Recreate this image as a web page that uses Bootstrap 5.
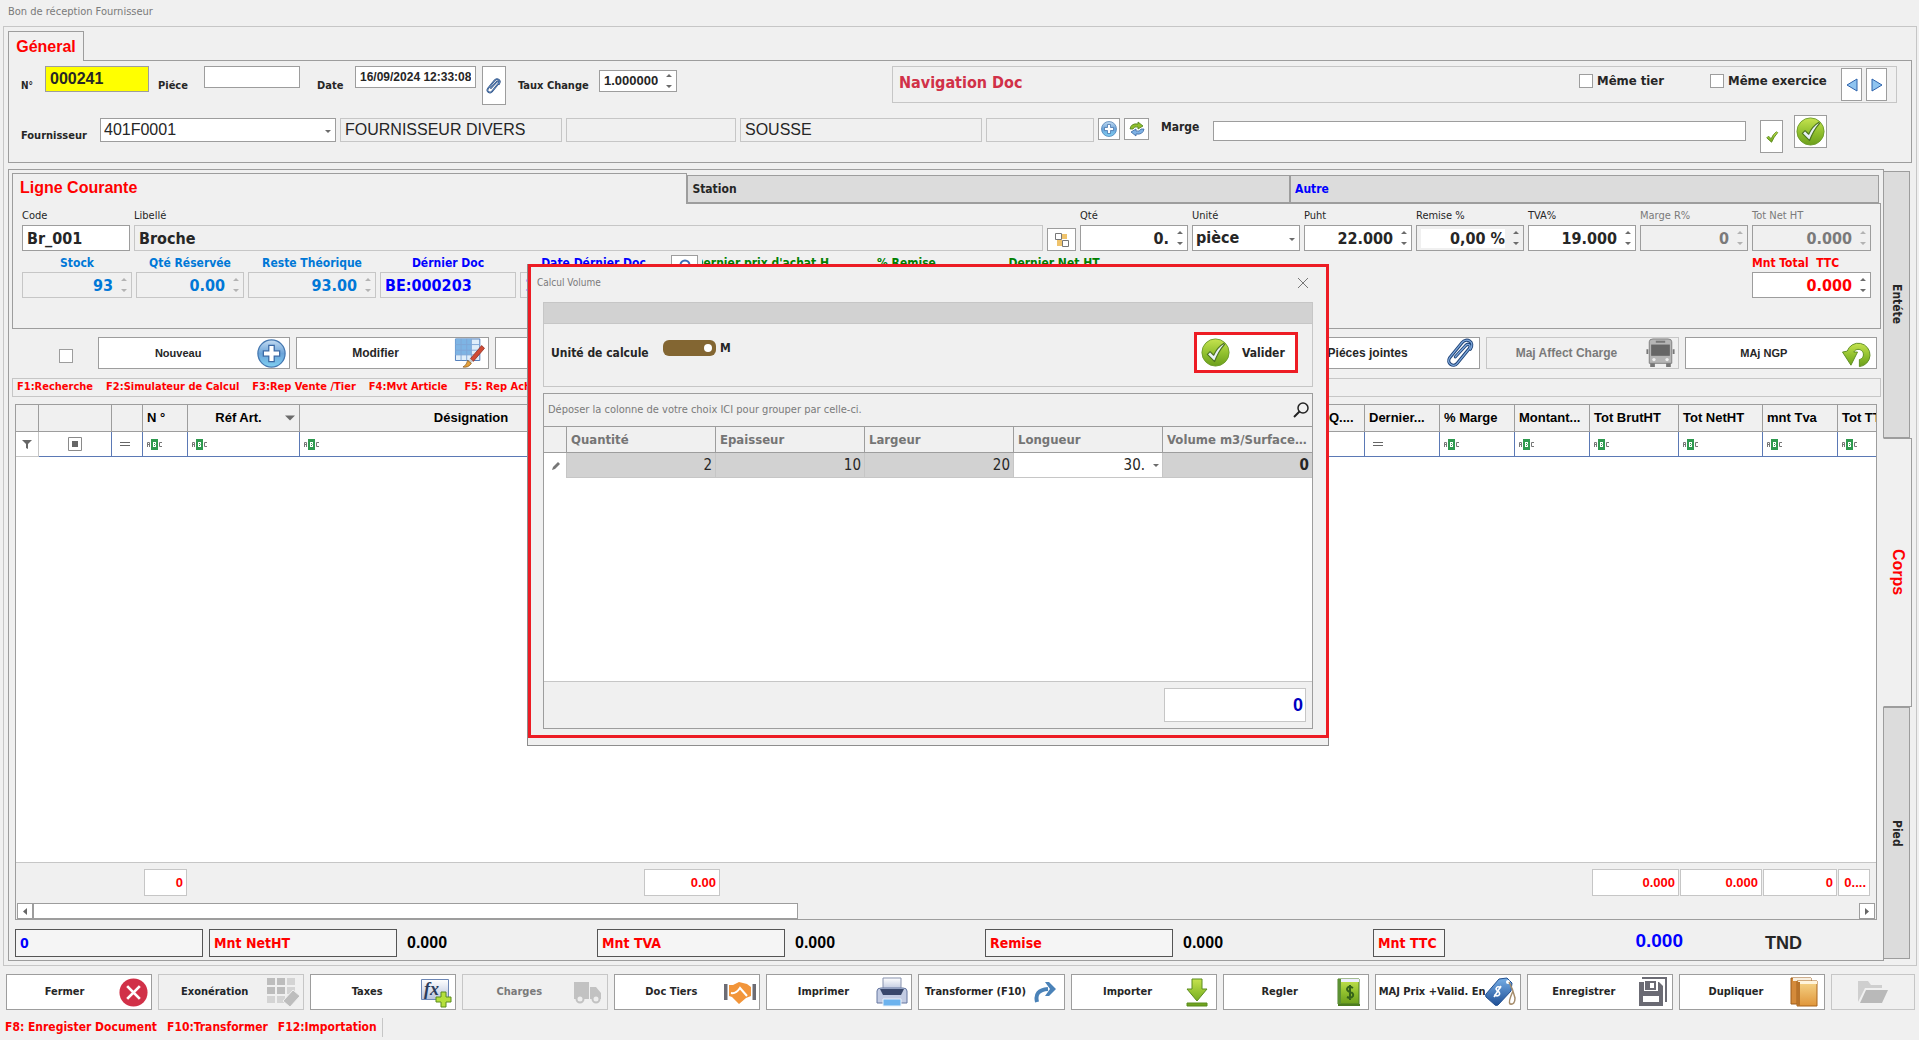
<!DOCTYPE html>
<html lang="fr">
<head>
<meta charset="utf-8">
<meta name="viewport" content="width=device-width, initial-scale=1">
<title>Bon de réception Fournisseur</title>
<link href="https://cdn.jsdelivr.net/npm/bootstrap@5.3.0/dist/css/bootstrap.min.css" rel="stylesheet">
<style>
:root{--bg:#f0f0f0;--line:#9d9d9d;--soft:#c6c6c6;--ink:#262626;--tah:"DejaVu Sans Condensed","DejaVu Sans",sans-serif;--ari:"Liberation Sans",Arial,sans-serif}
body{background:var(--bg);color:var(--ink);font:11px/16px var(--tah);min-height:100vh;overflow-x:hidden}
button,input,select{font:inherit;color:inherit;border-radius:0}
svg{display:block;flex:none}
.ari{font-family:var(--ari)}
.f10{font-size:10px}.f11{font-size:11px}.f12{font-size:12px}.f13{font-size:13px}.f16{font-size:16px}
.c-red{color:#f00!important}.c-blue{color:#00f!important}.c-sky{color:#0078d7!important}.c-green{color:#008000!important}.c-dim{color:#7a7a7a!important}
.app-title{height:26px;padding:4px 8px;font-size:11px;color:#7a7a7a}
.frame{margin:0 2px 0 3px;border:1px solid var(--soft);padding:4px 4px 4px 4px}
.tab-main{border:1px solid var(--line);border-bottom:0;background:var(--bg);height:30px;width:76px;margin-bottom:-1px;color:#f00;font:700 16px/26px var(--ari);padding:0;position:relative}
.box-top{border:1px solid var(--line);padding:5px 14px 9px 12px}
.inp{border:1px solid var(--line);background:#fff;height:22px;padding:0 4px;min-width:0;display:flex;align-items:center;border-radius:0}
input.inp{display:block}
.inp input{border:0;background:transparent;padding:0;min-width:0;width:100%;outline:0}
.inp.ro,input.inp:read-only.ro{background:transparent;border-color:var(--soft)}
.h24{height:24px}.h26{height:26px}
.num input{text-align:right;font-weight:700}
.num svg{margin-left:8px}
.num.dim svg{opacity:.45}
.big input,.big select,input.big{font-size:16px;font-weight:700}
.sel{position:relative;padding:0}
.sel select{appearance:none;border:0;background:transparent;width:100%;height:100%;padding:0 20px 0 3px;outline:0}
.sel svg{position:absolute;right:4px;top:50%}
.tb{border:1px solid var(--line);background:#fff;padding:0;display:flex;align-items:center;justify-content:center}
.chk{appearance:none;width:14px;height:14px;border:1px solid var(--line);background:#fff;margin:0;flex:none}
.nav-doc{border:1px solid var(--soft);height:37px;margin-left:215px;padding:1px 9px 0 6px}
.body-frame{border:1px solid var(--line);padding:3px 2px 3px 3px;position:relative}
.sub-tabs{padding-right:2px}
.sub-tabs button{border:1px solid var(--line);border-left-width:1px;background:#dcdcdc;height:28px;text-align:left;padding:0 4px;font-weight:700;font-size:12px}
.sub-tabs button.on{border-width:1px 1px 0 1px;background:var(--bg);height:31px;margin-bottom:-1px;color:#f00;font:700 16px/26px var(--ari);padding:0 7px 3px;position:relative}
.t1{flex:672 1 0}.t2{flex:604 1 0}.t3{flex:590 1 0}
.line-box{border:1px solid var(--line);height:126px;padding:4px 9px 0 9px}
.col-f{flex:none;width:108px}
.col-f label{display:block;height:17px;line-height:16px;white-space:nowrap}
.r2 label{font-weight:700;font-size:12px;text-align:center}
.acts{padding:8px 4px 0 47px;height:49px}
.acts .chk{margin:12px 19px 0 0}
.act{flex:1 1 0;min-width:0;height:32px;border:1px solid var(--line);background:#fff;font:700 12px/16px var(--ari);display:flex;align-items:center;padding:0 3px 0 0}
.act.sm{font-size:11px}
.act span,.cmd span{flex:1;text-align:center;white-space:nowrap;overflow:hidden}
.act.off,.cmd.off{background:transparent;border-color:var(--soft)}
.keys{border:1px solid var(--soft);height:19px;padding:0 4px;color:#f00;font-weight:700;gap:13px;overflow:hidden;white-space:nowrap}
.grid-wrap{border:1px solid var(--line);margin:7px 4px 9px 3px;background:#fff;flex:1;overflow:hidden}
table.dg{width:100%;table-layout:fixed;border-collapse:separate;border-spacing:0;margin:0}
.dg th{background:var(--bg);border-right:1px solid var(--line);border-bottom:1px solid var(--line);height:27px;padding:0 4px;font:700 13px/16px var(--ari);color:#000;white-space:nowrap;overflow:hidden}
.dg th:last-child,.dg td:last-child{border-right:0!important}
.main td{height:25px;padding:0 4px;border-right:1px solid #5b79b5;border-bottom:1px solid #5b79b5}
.tot{border:1px solid var(--soft);background:#fff;height:27px;text-align:right;padding:0 3px;color:#f00;font:700 13px/25px var(--ari);overflow:hidden}
.g-foot{background:var(--bg);border-top:1px solid var(--soft);height:57px;padding-top:6px}
.foot-row{display:grid;grid-template-columns:127px 43px 455px 76px 1fr 87px 82px 74px 32px 5px;column-gap:1px}
.hbar{margin-top:7px;padding:0 1px;height:16px}
.hbar button{width:16px;height:16px}
.thumb{border:1px solid var(--line);background:#fff;width:41.2%;height:16px}
.sums{padding:0 4px 0 3px;height:28px;gap:6px}
.sum-l{border:1px solid #555;background:#f5f5f5;flex:0 1 188px;height:28px;padding:0 4px;font-weight:700;font-size:14px;line-height:26px}
.sum-v{font:700 16px/28px var(--ari);color:#000;flex:0 1 188px;padding-left:4px}
.side{width:29px;margin-left:-1px;padding:2px 0 2px;position:relative}
.side button{border:1px solid var(--line);background:#dcdcdc;writing-mode:vertical-rl;width:27px;padding:0;font-weight:700;font-size:12px;text-align:center}
.side button.on{background:var(--bg);border-left-color:var(--bg);width:29px;color:#f00;font:700 16px/24px var(--ari)}
.cmds{gap:6px;padding:8px 4px 0 6px}
.cmd{flex:1 1 146px;min-width:0;height:36px;border:1px solid var(--line);background:#fff;font-weight:700;display:flex;align-items:center;padding:0 3px}
.cmd.short{flex-basis:84px}
.ico{flex:none;width:32px;display:flex;justify-content:center}
.status{height:30px;padding:8px 5px;color:#f00;font-weight:700;font-size:12px;line-height:18px;gap:10px}
.status .bar{border-left:1px solid var(--soft);margin-left:-5px;height:19px}
/* floating volume window */
.dlg{position:absolute;left:527px;top:264px;width:802px;height:482px;border:1px solid #8d8d8d;background:var(--bg);z-index:5}
.dlg-in{border:3px solid #ed1c24;margin:-1px -1px 0 0;height:474px;padding:4px 13px 6px 12px}
.dlg-t{height:31px;padding-top:2px;margin-left:-6px;color:#7a7a7a}
.dlg-t span{line-height:20px}
.grp{border:1px solid var(--soft);height:85px}
.grp-h{background:#d2d2d2;border-bottom:1px solid var(--soft);height:21px}
.ok{border:3px solid #ed1c24;background:#fff;width:104px;height:41px;font-weight:700;font-size:12px;display:flex;align-items:center;padding:0 0 0 4px;gap:12px}
.tog{appearance:none;width:53px;height:16px;border-radius:6px;background:#836632;margin:0;position:relative}
.tog::after{content:"";position:absolute;right:4px;top:4px;width:8px;height:8px;border-radius:50%;background:#fff}
.vg{border:1px solid var(--line);background:#fff;margin-top:6px}
.vg-g{height:33px;background:var(--bg);border-bottom:1px solid var(--line);padding:0 3px 0 4px;color:#7a7a7a}
.dg.vol th{font:700 13px/16px var(--tah);color:#757575;height:26px;text-overflow:ellipsis}
.vol td{background:#d2d2d2;height:25px;border-right:1px solid var(--soft);border-bottom:1px solid var(--soft);font-size:15px;text-align:right;padding:0 3px}
.vol td.w{background:#fff;color:inherit}
.vol input{width:100%;border:0;background:transparent;text-align:right;padding:0;outline:0}
.vg-f{background:var(--bg);border-top:1px solid var(--soft);height:47px;padding:6px 6px}
.vg-f input{width:142px;height:34px;border:1px solid var(--soft);background:#fff;text-align:right;font:700 18px/20px var(--ari);color:#0000c0;padding:0 2px}
</style>
<script src="https://cdn.jsdelivr.net/npm/bootstrap@5.3.0/dist/js/bootstrap.bundle.min.js"></script>
</head>
<body class="d-flex flex-column">
<svg width="0" height="0" class="position-absolute" aria-hidden="true">
<defs>
<linearGradient id="gG" x2="0" y2="1"><stop offset="0" stop-color="#c6e34f"/><stop offset=".55" stop-color="#8fbf2d"/><stop offset="1" stop-color="#6c9f1c"/></linearGradient>
<linearGradient id="gB" x2="0" y2="1"><stop offset="0" stop-color="#c4dcf2"/><stop offset=".5" stop-color="#6ba3d8"/><stop offset="1" stop-color="#7fd0f2"/></linearGradient>
<linearGradient id="gN" x2="0" y2="1"><stop offset="0" stop-color="#76aee6"/><stop offset="1" stop-color="#1f4f96"/></linearGradient>
<linearGradient id="gO" x2="0" y2="1"><stop offset="0" stop-color="#f6d58a"/><stop offset="1" stop-color="#e0963a"/></linearGradient>
<linearGradient id="gS" x2="0" y2="1"><stop offset="0" stop-color="#fff"/><stop offset="1" stop-color="#b9c3dc"/></linearGradient>
<symbol id="spin" viewBox="0 0 6 16"><path d="M0 4h6L3 1zM0 12h6l-3 3z" fill="#6b6b6b"/></symbol>
<symbol id="dn" viewBox="0 0 6 3"><path d="M0 0h6L3 3z" fill="#6b6b6b"/></symbol>
<symbol id="clip" viewBox="0 0 32 32"><g fill="none" stroke-linecap="round"><path d="M10 20 21 8c3-3 6 0 4 3L12 27c-4 5-12 0-8-6L17 5c5-6 14-1 9 7" stroke="#1f4377" stroke-width="3.400"/><path d="M10 20 21 8c3-3 6 0 4 3L12 27c-4 5-12 0-8-6L17 5c5-6 14-1 9 7" stroke="#7fa9dd" stroke-width="1.300"/></g></symbol>
<symbol id="plus" viewBox="0 0 32 32"><circle cx="16" cy="16" r="15" fill="url(#gB)" stroke="#4477b0" stroke-width="1.400"/><path d="M13 7h6v6h6v6h-6v6h-6v-6H7v-6h6z" fill="#fff" stroke="#3a69a5" stroke-width="1.400"/></symbol>
<symbol id="okay" viewBox="0 0 32 32"><circle cx="16" cy="16" r="15" fill="url(#gG)" stroke="#6b9a2a"/><path d="M7 18l3-3 4 4Q18 10 25 6l1 1Q19 15 15 26z" fill="#e9f1f7" stroke="#4d7420" stroke-width="1.300" stroke-linejoin="round"/></symbol>
<symbol id="tick" viewBox="0 0 16 16"><path d="M2 9l2-2 3 3Q9 5 13 2l1.500 1Q10 8 7.500 14z" fill="url(#gG)" stroke="#5b8a1c"/></symbol>
<symbol id="swap" viewBox="0 0 16 16"><path d="M1 8Q2 2 9 3V1l5 4-5 3V6Q5 5 4 8z" fill="#8fbf2d" stroke="#4d7e1c" stroke-width=".8"/><path d="M15 8q-1 6-8 5v2l-5-4 5-3v2q4 1 5-2z" fill="#7db0e4" stroke="#3766a0" stroke-width=".8"/></symbol>
<symbol id="lt" viewBox="0 0 12 14"><path d="M11 1v12L1 7z" fill="#8fc4f0" stroke="#2d62ac" stroke-linejoin="round"/></symbol>
<symbol id="rt" viewBox="0 0 12 14"><path d="M1 1v12l10-6z" fill="#8fc4f0" stroke="#2d62ac" stroke-linejoin="round"/></symbol>
<symbol id="cells" viewBox="0 0 16 16"><path d="M8 2h5v5H8zM3 8h5v6H3z" fill="#efc36c"/><path d="M1.500 1.500h6v6h-6zM8.500 8.500h6v6h-6z" fill="#fff" stroke="#777"/></symbol>
<symbol id="abc" viewBox="0 0 16 11"><path d="M4 0h7v11H4z" fill="#2f9a4f"/><g fill="none" stroke="#777"><path d="M.5 8V3.500h2V8M.5 5.500h2"/><path d="M15 3.500h-2.500v4H15"/></g><path d="M6 3h3v2h-.5v1H9v2H6z" fill="#fff"/><path d="M7 4h1v1H7zM7 6h1v1H7z" fill="#2f9a4f"/></symbol>
<symbol id="eq" viewBox="0 0 10 10"><path d="M0 3.500h10M0 6.500h10" stroke="#666"/></symbol>
</defs></svg>

<header class="app-title">Bon de réception Fournisseur</header>
<main class="frame d-flex flex-column flex-grow-1">
  <div class="d-flex"><button class="tab-main">Géneral</button></div>
  <section class="box-top">
    <div class="d-flex align-items-start" style="height:49px">
      <div class="d-flex fw-bold" style="height:39px">
        <label for="no" class="align-self-center f10" style="width:24px">N°</label>
        <input id="no" class="inp h26 f16 ari fw-bold" style="width:104px;background:#ff0" value="000241">
        <label for="pc" class="align-self-center" style="width:55px;padding-left:9px">Piéce</label>
        <input id="pc" class="inp" style="width:96px">
        <label for="dt" class="align-self-center" style="width:55px;padding-left:17px">Date</label>
        <input id="dt" class="inp ari f12 fw-bold" style="width:121px" value="16/09/2024 12:33:08">
        <button class="tb" style="width:24px;margin:0 12px 0 6px" aria-label="Joindre"><svg width="16" height="16"><use href="#clip"/></svg></button>
        <label for="tc" class="align-self-center" style="width:81px">Taux Change</label>
        <div class="inp num mt-1" style="width:78px"><input id="tc" class="ari f13" value="1.000000"><svg width="6" height="16"><use href="#spin"/></svg></div>
      </div>
      <div class="nav-doc d-flex flex-grow-1">
        <div class="fw-bold f16 flex-grow-1" style="color:#d13148;line-height:30px">Navigation Doc</div>
        <div class="d-flex align-items-center fw-bold f13" style="height:26px">
          <input class="chk" type="checkbox" id="mt"><label class="ps-1" for="mt" style="width:117px">Même tier</label>
          <input class="chk" type="checkbox" id="me"><label class="ps-1" for="me" style="width:117px">Même exercice</label>
        </div>
        <button class="tb me-1" style="width:21px;height:33px" aria-label="Précédent"><svg width="12" height="14"><use href="#lt"/></svg></button>
        <button class="tb" style="width:21px;height:33px" aria-label="Suivant"><svg width="12" height="14"><use href="#rt"/></svg></button>
      </div>
    </div>
    <div class="d-flex" style="height:38px;padding-right:70px">
      <div class="d-flex align-items-start flex-grow-1" style="padding-top:3px;gap:4px">
        <label class="fw-bold align-self-center" for="fo" style="width:75px">Fournisseur</label>
        <div class="inp sel h24 ari f16" style="width:236px"><select id="fo"><option>401F0001</option></select><svg width="6" height="3"><use href="#dn"/></svg></div>
        <input class="inp ro h24 ari f16" style="width:222px" readonly value="FOURNISSEUR DIVERS" aria-label="Nom">
        <input class="inp ro h24 ari f16" style="width:170px" readonly aria-label="Adresse">
        <input class="inp ro h24 ari f16" style="width:242px" readonly value="SOUSSE" aria-label="Ville">
        <input class="inp ro h24 ari f16" style="width:108px" readonly aria-label="Tél">
        <button class="tb" style="width:22px;height:22px" aria-label="Ajouter"><svg width="16" height="16"><use href="#plus"/></svg></button>
        <button class="tb" style="width:25px;height:22px" aria-label="Actualiser"><svg width="16" height="16"><use href="#swap"/></svg></button>
        <label class="fw-bold f12 ps-2" for="mg" style="width:56px;line-height:18px">Marge</label>
        <input id="mg" class="inp flex-grow-1" style="height:20px;margin-top:3px">
      </div>
      <button class="tb align-self-end" style="width:23px;height:33px;margin-left:14px" aria-label="Appliquer"><svg width="14" height="14"><use href="#tick"/></svg></button>
      <button class="tb" style="width:33px;height:33px;margin-left:11px" aria-label="Valider tout"><svg width="29" height="29"><use href="#okay"/></svg></button>
    </div>
  </section>

  <div class="d-flex flex-grow-1" style="margin-top:6px">
    <section class="body-frame d-flex flex-column flex-grow-1" style="min-width:0">
      <div class="sub-tabs d-flex align-items-end"><button class="on t1">Ligne Courante</button><button class="t2">Station</button><button class="t3 c-blue f13">Autre</button></div>
      <div class="line-box">
        <div class="d-flex" style="gap:4px">
          <div class="col-f"><label for="cd">Code</label><input id="cd" class="inp h26 big w-100" value="Br_001"></div>
          <div class="col-f flex-grow-1"><label for="lb">Libellé</label><input id="lb" class="inp ro h26 big w-100" readonly value="Broche"></div>
          <button class="tb align-self-end" style="width:29px;height:23px" aria-label="Variantes"><svg width="16" height="16"><use href="#cells"/></svg></button>
          <div class="col-f"><label for="qt">Qté</label><div class="inp h26 num big"><input id="qt" value="0."><svg width="6" height="16"><use href="#spin"/></svg></div></div>
          <div class="col-f"><label for="un">Unité</label><div class="inp h26 sel big"><select id="un"><option>pièce</option></select><svg width="6" height="3"><use href="#dn"/></svg></div></div>
          <div class="col-f"><label for="pu">Puht</label><div class="inp h26 num big"><input id="pu" value="22.000"><svg width="6" height="16"><use href="#spin"/></svg></div></div>
          <div class="col-f"><label for="rm">Remise %</label><div class="inp h26 num big" style="background:#f0f0f0"><input id="rm" class="bg-white" value="0,00 %"><svg width="6" height="16"><use href="#spin"/></svg></div></div>
          <div class="col-f"><label for="tv">TVA%</label><div class="inp h26 num big"><input id="tv" value="19.000"><svg width="6" height="16"><use href="#spin"/></svg></div></div>
          <div class="col-f c-dim"><label for="mr">Marge R%</label><div class="inp h26 num big dim" style="background:#f0f0f0"><input id="mr" value="0" readonly><svg width="6" height="16"><use href="#spin"/></svg></div></div>
          <div class="col-f c-dim" style="width:119px"><label for="tn">Tot Net HT</label><div class="inp h26 num big dim" style="background:#f0f0f0"><input id="tn" value="0.000" readonly><svg width="6" height="16"><use href="#spin"/></svg></div></div>
        </div>
        <div class="d-flex r2 pt-1" style="gap:4px">
          <div class="col-f c-sky" style="width:110px"><label for="st">Stock</label><div class="inp ro h26 num big dim"><input id="st" readonly value="93"><svg width="6" height="16"><use href="#spin"/></svg></div></div>
          <div class="col-f c-sky"><label for="qr">Qté Réservée</label><div class="inp ro h26 num big dim"><input id="qr" readonly value="0.00"><svg width="6" height="16"><use href="#spin"/></svg></div></div>
          <div class="col-f c-sky" style="width:128px"><label for="rt1">Reste Théorique</label><div class="inp ro h26 num big dim"><input id="rt1" readonly value="93.00"><svg width="6" height="16"><use href="#spin"/></svg></div></div>
          <div class="col-f c-blue" style="width:136px"><label for="dd">Dérnier Doc</label><input id="dd" class="inp ro h26 big w-100" readonly value="BE:000203"></div>
          <div class="col-f c-blue" style="width:147px"><label for="ddd">Date Dérnier Doc</label><input id="ddd" class="inp ro h26 big w-100" readonly value="16/09/2024"></div>
          <button class="tb" style="width:27px;height:22px" aria-label="Chercher"><svg width="16" height="16" viewBox="0 0 16 16"><circle cx="8" cy="7" r="4.500" fill="none" stroke="#3a6cb5" stroke-width="2"/></svg></button>
          <div class="col-f c-green d-flex justify-content-center overflow-hidden" style="width:127px"><span class="fw-bold f12 text-nowrap">Dernier prix d'achat HT</span></div>
          <div class="col-f c-green" style="width:147px"><label class="text-center">% Remise</label></div>
          <div class="col-f c-green" style="width:140px"><label>Dernier Net HT</label></div>
          <div class="col-f c-red ms-auto" style="width:119px"><label for="mtt" class="text-start" style="white-space:pre">Mnt Total  TTC</label><div class="inp h26 num big"><input id="mtt" value="0.000"><svg width="6" height="16"><use href="#spin"/></svg></div></div>
        </div>
      </div>

      <div class="acts d-flex" style="gap:6px">
        <input class="chk" type="checkbox" aria-label="Tout">
        <button class="act sm"><span>Nouveau</span><svg width="29" height="29"><use href="#plus"/></svg></button>
        <button class="act"><span>Modifier</span><svg width="31" height="30" viewBox="0 0 32 32"><path d="M1 1h26v23H1z" fill="#dfeefa" stroke="#4a78b8"/><path d="M1 1h17v17H1z" fill="#7db4e4"/><path d="M1 7h26M1 13h26M1 18h26M7 1v23M13 1v23M18 1v23" stroke="#7fa6d6" fill="none"/><path d="M29 8 17 22l3 3L32 11z" fill="#d04a35" stroke="#8c2a1c" stroke-width=".8"/><path d="M17 22l3 3-3 2-3-2z" fill="#ccc"/><path d="M14 24l4 3q-3 5-9 4 4-2 5-7z" fill="#e6a13a" stroke="#7a4b12" stroke-width=".7"/></svg></button>
        <button class="act"></button><button class="act"></button><button class="act"></button><button class="act"></button>
        <button class="act"><span>Piéces jointes</span><svg width="30" height="30"><use href="#clip"/></svg></button>
        <button class="act off c-dim"><span>Maj Affect Charge</span><svg width="29" height="30" viewBox="0 0 30 32"><path d="M3 4q0-3 4-3h16q4 0 4 3v23H3z" fill="#b5b5b5" stroke="#7e7e7e"/><path d="M5 7h20v12H5z" fill="#666"/><path d="M10 3h10v2H10zM0 12h2v5H0zM28 12h2v5h-2zM4 27h5v4H4zM21 27h5v4h-5z" fill="#777"/><circle cx="8" cy="23" r="1.800" fill="#eee"/><circle cx="22" cy="23" r="1.800" fill="#eee"/></svg></button>
        <button class="act sm"><span>MAj NGP</span><svg width="31" height="30" viewBox="0 0 32 32"><path d="M5 14A12.500 12.500 0 1 1 18 30.500v-7.500A5.500 5.500 0 1 0 12 15h4l-7 14L0 15z" fill="url(#gG)" stroke="#5b8c1e" stroke-linejoin="round"/></svg></button>
      </div>
      <div class="keys d-flex"><span>F1:Recherche</span><span>F2:Simulateur de Calcul</span><span>F3:Rep Vente /Tier</span><span>F4:Mvt Article</span><span class="ps-1">F5: Rep Achat</span></div>

      <div class="grid-wrap d-flex flex-column">
        <table class="dg main">
          <colgroup><col style="width:23px"><col style="width:73px"><col style="width:31px"><col style="width:45px"><col style="width:112px"><col style="width:343px"><col style="width:78px"><col><col style="width:44px"><col style="width:75px"><col style="width:75px"><col style="width:75px"><col style="width:89px"><col style="width:84px"><col style="width:75px"><col style="width:38px"></colgroup>
          <thead><tr><th></th><th></th><th></th><th>N °</th><th><div class="d-flex align-items-center"><span class="flex-grow-1 text-center">Réf Art.</span><svg width="10" height="6"><use href="#dn"/></svg></div></th><th class="text-center">Désignation</th><th></th><th></th><th class="px-2">Q....</th><th>Dernier...</th><th>% Marge</th><th>Montant...</th><th>Tot BrutHT</th><th>Tot NetHT</th><th>mnt Tva</th><th>Tot TTC</th></tr></thead>
          <tbody><tr>
            <td style="border-color:#c6c6c6"><svg class="mx-auto" width="10" height="9" viewBox="0 0 10 9"><path d="M0 0h10L6 4v5L4 8V4z" fill="#666"/></svg></td>
            <td><svg class="mx-auto" width="14" height="14"><path d="M.5.5h13v13H.5z" fill="#fff" stroke="#8a8a8a"/><path d="M4 4h6v6H4z" fill="#666"/></svg></td>
            <td><svg width="10" height="10" class="ms-1"><use href="#eq"/></svg></td>
            <td><svg width="16" height="11"><use href="#abc"/></svg></td><td><svg width="16" height="11"><use href="#abc"/></svg></td><td><svg width="16" height="11"><use href="#abc"/></svg></td>
            <td></td><td></td><td></td><td class="px-2"><svg width="10" height="10"><use href="#eq"/></svg></td>
            <td><svg width="16" height="11"><use href="#abc"/></svg></td><td><svg width="16" height="11"><use href="#abc"/></svg></td><td><svg width="16" height="11"><use href="#abc"/></svg></td><td><svg width="16" height="11"><use href="#abc"/></svg></td><td><svg width="16" height="11"><use href="#abc"/></svg></td><td><svg width="16" height="11"><use href="#abc"/></svg></td>
          </tr></tbody>
        </table>
        <div class="flex-grow-1"></div>
        <div class="g-foot">
          <div class="foot-row"><i></i><div class="tot">0</div><i></i><div class="tot">0.00</div><i></i><div class="tot">0.000</div><div class="tot">0.000</div><div class="tot">0</div><div class="tot">0....</div></div>
          <div class="hbar d-flex">
            <button class="tb" aria-label="Gauche"><svg width="4" height="7" viewBox="0 0 4 7"><path d="M4 0v7L0 3.500z" fill="#666"/></svg></button>
            <div class="thumb"></div>
            <button class="tb ms-auto" aria-label="Droite"><svg width="4" height="7" viewBox="0 0 4 7"><path d="M0 0v7l4-3.500z" fill="#666"/></svg></button>
          </div>
        </div>
      </div>
      <div class="sums d-flex">
        <div class="sum-l c-blue">0</div><div class="sum-l c-red">Mnt NetHT</div><div class="sum-v">0.000</div>
        <div class="sum-l c-red">Mnt TVA</div><div class="sum-v">0.000</div>
        <div class="sum-l c-red">Remise</div><div class="sum-v">0.000</div>
        <div class="sum-l c-red" style="flex-basis:72px">Mnt TTC</div>
        <div class="ari fw-bold c-blue ms-auto" style="font-size:19px;line-height:24px">0.000</div>
        <div class="ari fw-bold" style="font-size:18px;line-height:28px;padding-left:76px;width:188px">TND</div>
      </div>
    </section>
    <nav class="side d-flex flex-column"><button style="flex:267 1 0">Entéte</button><button class="on" style="flex:269 1 0">Corps</button><button style="flex:252 1 0">Pied</button></nav>
  </div>
</main>

<div class="cmds d-flex">
  <button class="cmd"><span>Fermer</span><svg width="29" height="29" viewBox="0 0 32 32"><circle cx="16" cy="16" r="15.500" fill="#d13148"/><path d="M9 9l14 14M23 9 9 23" stroke="#fff" stroke-width="3"/></svg></button>
  <button class="cmd off"><span class="text-dark">Exonération</span><svg width="33" height="30" viewBox="0 0 33 30"><path d="M0 1h8v7H0zM10 1h8v7h-8zM0 10h8v7H0zM10 10h8v7h-8z" fill="#bdbdbd"/><path d="M20 1h8v7h-8zM20 10h8v7h-8zM0 19h8v7H0zM10 19h8v7h-8z" fill="#d4d4d4"/><path d="M26 13l7 6-10 11-7-6z" fill="#bdbdbd" stroke="#f0f0f0"/></svg></button>
  <button class="cmd"><span>Taxes</span><svg width="32" height="32" viewBox="0 0 32 32"><path d="M1.500 3.500h27v20h-27z" fill="url(#gS)" stroke="#6d87b5"/><text x="4" y="19" font-family="Liberation Serif" font-style="italic" font-weight="700" font-size="18" fill="#2b3c5c">fx</text><path d="M21 16h5v5h5v5h-5v5h-5v-5h-5v-5h5z" fill="#b5e03c" stroke="#5b8c1e"/></svg></button>
  <button class="cmd off c-dim"><span>Charges</span><i class="ico"><svg width="30" height="24" viewBox="0 0 30 24"><path d="M1 2h15v17H1zM17 7h6l5 6v6H17z" fill="#c2c2c2"/><circle cx="7" cy="19" r="3.500" fill="#eee" stroke="#c2c2c2" stroke-width="2"/><circle cx="23" cy="19" r="3.500" fill="#eee" stroke="#c2c2c2" stroke-width="2"/></svg></i></button>
  <button class="cmd"><span>Doc Tiers</span><svg width="32" height="24" viewBox="0 0 32 24"><path d="M0 4h3.500v16H0zM28.500 4H32v16h-3.500z" fill="#6c6c74"/><path d="M5 5h4l6-3 8 2 4 3v9l-5 2-7 6-7-7-3-1z" fill="#f2953a"/><path d="M7 13q5 1 9-5l7 8" fill="none" stroke="#fff" stroke-width="2"/></svg></button>
  <button class="cmd"><span>Imprimer</span><svg width="32" height="30" viewBox="0 0 32 30"><path d="M7 1h18v12H7z" fill="url(#gS)" stroke="#8792ae"/><path d="M1 14q0-3 4-3h22q4 0 4 3v12H1z" fill="#c3cce3" stroke="#6576a0"/><path d="M4 12h24l-3 6H7z" fill="#39476b"/><path d="M7 22h18v7H7z" fill="#6db3ee" stroke="#eaf2fa"/></svg></button>
  <button class="cmd"><span>Transformer (F10)</span><i class="ico"><svg width="22" height="22" viewBox="0 0 22 22"><path d="M3 21Q0 9 14 8" fill="none" stroke="#4a82b8" stroke-width="4"/><path d="M11 1l4 0 7 7-7 7h-4l5-7z" fill="#4a82b8"/></svg></i></button>
  <button class="cmd"><span>Importer</span><i class="ico"><svg width="22" height="29" viewBox="0 0 22 29"><path d="M6 1h10v10h5L11 23 1 11h5zM1 25h20v3H1z" fill="url(#gG)" stroke="#5b8c1e"/></svg></i></button>
  <button class="cmd"><span>Regler</span><i class="ico"><svg width="26" height="29" viewBox="0 0 26 29"><path d="M2 1h21v25H2z" fill="url(#gG)" stroke="#4a7a24"/><path d="M3 1h20v3H4z" fill="#eef"/><path d="M2 1h3v26H2z" fill="#5c9133"/><path d="M2 26h22v2H2z" fill="#4c7c20"/><path d="M17 10q-5-3-6 1 0 2 3 3 4 1 3 4-2 3-6 1M14 7v15" fill="none" stroke="#35621a" stroke-width="2"/></svg></i></button>
  <button class="cmd"><span>MAJ Prix +Valid. Ent</span><svg width="32" height="30" viewBox="0 0 32 30"><path d="M1 17 14 2l8-1 5 5-1 8-13 14q-2 1-3 0L1 20q-1-2 0-3z" fill="url(#gN)" stroke="#23508f"/><circle cx="23" cy="5" r="2" fill="#fff"/><path d="M16 11q-4-3-5 1 1 2 3 3 2 3-2 4l-3-1M16 9 9 20" fill="none" stroke="#fff" stroke-width="1.600"/><path d="M24 5q4 7 6 16 0 7-5 6-2-2 3-13" fill="none" stroke="#a48b6a" stroke-width="1.500"/></svg></button>
  <button class="cmd"><span>Enregistrer</span><i class="ico"><svg width="29" height="30" viewBox="0 0 29 30"><path d="M1 5v24h24V9l-4-4h-1v9H6V5z" fill="#6b6b74"/><path d="M4 1h24v24" fill="none" stroke="#6b6b74" stroke-width="2"/><path d="M8 5h9v7H8z" fill="none" stroke="#6b6b74" stroke-width="2"/><path d="M9 6h3v5H9z" fill="#6b6b74"/><path d="M5 19h16v6H5z" fill="#fff"/></svg></i></button>
  <button class="cmd"><span>Dupliquer</span><i class="ico"><svg width="29" height="30" viewBox="0 0 29 30"><path d="M1 1h20v26H1z" fill="#d48a3a" stroke="#9c5c1a"/><path d="M3 1h18v3H3z" fill="#f8efe0"/><path d="M7 4h20v25H7z" fill="url(#gO)" stroke="#a9651c"/><path d="M8 4h19v3H9z" fill="#fff4dc"/><path d="M7 5h3v24H7z" fill="#b8732a"/></svg></i></button>
  <button class="cmd off short justify-content-center" aria-label="Ouvrir"><svg width="30" height="24" viewBox="0 0 30 24"><path d="M0 1h10l3 4h11v3H7L0 22z" fill="#cfcfcf"/><path d="M8 10h22l-6 13H2z" fill="#b9b9b9"/></svg></button>
</div>
<footer class="status d-flex"><span>F8: Enregister Document</span><span>F10:Transformer</span><span>F12:Importation</span><span class="bar"></span></footer>

<section class="dlg" role="dialog" aria-label="Calcul Volume">
  <div class="dlg-in d-flex flex-column">
    <div class="dlg-t d-flex justify-content-between"><span class="f10">Calcul Volume</span>
      <button class="border-0 bg-transparent p-0 align-self-start mt-1 me-1" aria-label="Fermer"><svg width="12" height="12"><path d="M1 1l10 10M11 1 1 11" stroke="#777"/></svg></button></div>
    <div class="grp"><div class="grp-h"></div>
      <div class="d-flex align-items-start pt-2" style="padding-left:7px;padding-right:14px">
        <label class="fw-bold f12 pt-1" for="tg" style="width:112px;line-height:34px">Unité de calcule</label>
        <input class="tog mt-2" type="checkbox" id="tg" checked><span class="fw-bold f12 ps-1 mt-2">M</span>
        <button class="ok ms-auto"><svg width="29" height="29"><use href="#okay"/></svg>Valider</button>
      </div></div>
    <div class="vg d-flex flex-column flex-grow-1">
      <div class="vg-g d-flex align-items-center justify-content-between"><span>Déposer la colonne de votre choix ICI pour grouper par celle-ci.</span><svg width="16" height="16" viewBox="0 0 16 16"><circle cx="10" cy="6" r="5" fill="none" stroke="#222" stroke-width="1.500"/><path d="M6.500 9.500 1 15" stroke="#222" stroke-width="2"/></svg></div>
      <table class="dg vol"><colgroup><col style="width:23px"><col style="width:149px"><col style="width:149px"><col style="width:149px"><col style="width:149px"><col></colgroup>
        <thead><tr><th></th><th>Quantité</th><th>Epaisseur</th><th>Largeur</th><th>Longueur</th><th>Volume m3/Surface m2</th></tr></thead>
        <tbody><tr><td class="w" style="border-bottom:0"><svg class="ms-1" width="10" height="10" viewBox="0 0 10 10"><path d="M1 9l1-3 5-5 2 2-5 5z" fill="#777"/></svg></td><td>2</td><td>10</td><td>20</td><td class="w"><div class="d-flex align-items-center"><input value="30." aria-label="Longueur"><svg class="ms-2" width="6" height="3"><use href="#dn"/></svg></div></td><td class="fw-bold">0</td></tr></tbody></table>
      <div class="flex-grow-1"></div>
      <div class="vg-f d-flex justify-content-end"><input value="0" aria-label="Total"></div>
    </div>
  </div>
</section>
</body>
</html>
